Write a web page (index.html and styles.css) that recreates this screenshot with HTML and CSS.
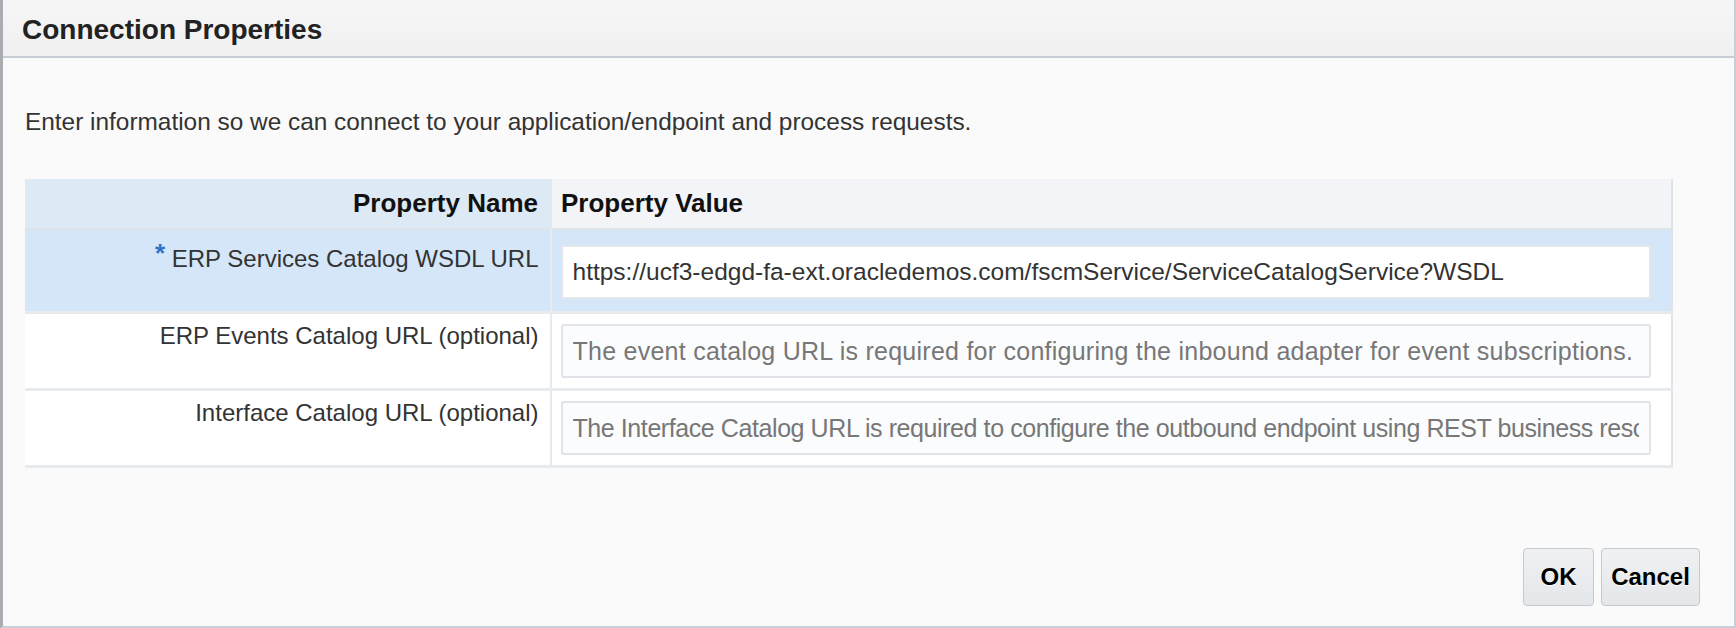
FILE: index.html
```html
<!DOCTYPE html>
<html>
<head>
<meta charset="utf-8">
<title>Connection Properties</title>
<link rel="stylesheet" href="styles.css">
</head>
<body>
<div class="dialog">
  <div class="header"><h1 class="title">Connection Properties</h1></div>
  <div class="content">
    <p class="desc">Enter information so we can connect to your application/endpoint and process requests.</p>
    <table class="props">
      <thead>
        <tr>
          <th class="name-h">Property Name</th>
          <th class="value-h">Property Value</th>
        </tr>
      </thead>
      <tbody>
        <tr class="row selected">
          <td class="name"><span class="req">*</span> ERP Services Catalog WSDL URL</td>
          <td class="value"><input class="field filled" type="text" value="https://ucf3-edgd-fa-ext.oracledemos.com/fscmService/ServiceCatalogService?WSDL"></td>
        </tr>
        <tr class="row">
          <td class="name">ERP Events Catalog URL (optional)</td>
          <td class="value"><input class="field hint wide" type="text" placeholder="The event catalog URL is required for configuring the inbound adapter for event subscriptions."></td>
        </tr>
        <tr class="row">
          <td class="name">Interface Catalog URL (optional)</td>
          <td class="value"><input class="field hint tight" type="text" placeholder="The Interface Catalog URL is required to configure the outbound endpoint using REST business resources."></td>
        </tr>
      </tbody>
    </table>
  </div>
  <div class="footer">
    <button class="btn ok">OK</button>
    <button class="btn cancel">Cancel</button>
  </div>
</div>
</body>
</html>
```

FILE: styles.css
```css
html, body {
  margin: 0;
  padding: 0;
}
body {
  width: 1736px;
  height: 628px;
  background: #fafafa;
  font-family: "Liberation Sans", Arial, Helvetica, sans-serif;
  color: #333;
  overflow: hidden;
}
.dialog {
  box-sizing: border-box;
  width: 1736px;
  height: 628px;
  display: flex;
  flex-direction: column;
  background: #fafafa;
  border-left: 3px solid #a9adb1;
  border-right: 2px solid #c8ced6;
  border-bottom: 2px solid #c8ced6;
}
.header {
  box-sizing: border-box;
  height: 58px;
  flex: none;
  display: flex;
  align-items: center;
  padding-left: 19px;
  padding-top: 3px;
  background: linear-gradient(#f6f6f6, #f0f0f0);
  border-bottom: 2px solid #c6cdd5;
}
.title {
  margin: 0;
  font-size: 28px;
  font-weight: bold;
  color: #222;
  line-height: 32px;
}
.content {
  padding: 0 61px 0 22px;
}
.desc {
  margin: 50px 0 0 0;
  font-size: 24.4px;
  line-height: 28px;
  color: #333;
}
.props {
  margin-top: 43px;
  width: 100%;
  border-collapse: collapse;
  border-right: 2px solid #dfe3e8;
}
.props th {
  height: 49px;
  padding: 0;
  font-size: 26px;
  font-weight: bold;
  color: #111;
  border-bottom: 2px solid #dfe4e9;
}
.name-h {
  width: 513px;
  text-align: right;
  padding-right: 11px !important;
  background: #dde9f5;
  border-right: 3px solid #e1e7ee;
}
.value-h {
  text-align: left;
  padding-left: 9px !important;
  background: #f2f4f7;
}
.row td {
  background: #fff;
  border-bottom: 3px solid #e8ebee;
  vertical-align: top;
}
.row.selected td {
  background: #d4e6f8;
}
.name {
  font-size: 24px;
  line-height: 28px;
  text-align: right;
  color: #333;
  padding: 8px 11px 0 0;
  border-right: 2px solid #e8ebee;
}
.row.selected .name {
  padding-top: 14px;
}
.req {
  color: #2f72c6;
  font-weight: bold;
  font-size: 26px;
  position: relative;
  top: -5px;
}
.value {
  padding: 10px 20px 10px 9px;
}
.row.selected .value {
  padding-top: 15px;
  padding-bottom: 12px;
}
.field {
  box-sizing: border-box;
  display: block;
  width: 100%;
  height: 54px;
  margin: 0;
  padding: 0 10px;
  font-family: "Liberation Sans", Arial, Helvetica, sans-serif;
  font-size: 24.5px;
  color: #333;
  background: #fbfcfd;
  border: 2px solid #e0e3e7;
  border-radius: 3px;
  outline: none;
}
.field.hint {
  font-size: 25px;
}
.field.wide {
  letter-spacing: 0.25px;
}
.field.tight {
  letter-spacing: -0.42px;
}
.field.filled {
  background: #fff;
  border-color: #e3e7ec;
}
.field::placeholder {
  color: #777;
  opacity: 1;
}
.footer {
  margin-top: auto;
  display: flex;
  justify-content: flex-end;
  gap: 7px;
  padding: 0 34px 20px 0;
}
.btn {
  box-sizing: border-box;
  height: 58px;
  padding: 0;
  font-family: "Liberation Sans", Arial, Helvetica, sans-serif;
  font-size: 24px;
  font-weight: bold;
  color: #000;
  text-shadow: 0 1px 0 #fff;
  background: linear-gradient(#eff1f3, #e4e7ea);
  border: 1px solid #c3c9d0;
  border-radius: 4px;
}
.ok {
  width: 71px;
}
.cancel {
  width: 99px;
}
```
